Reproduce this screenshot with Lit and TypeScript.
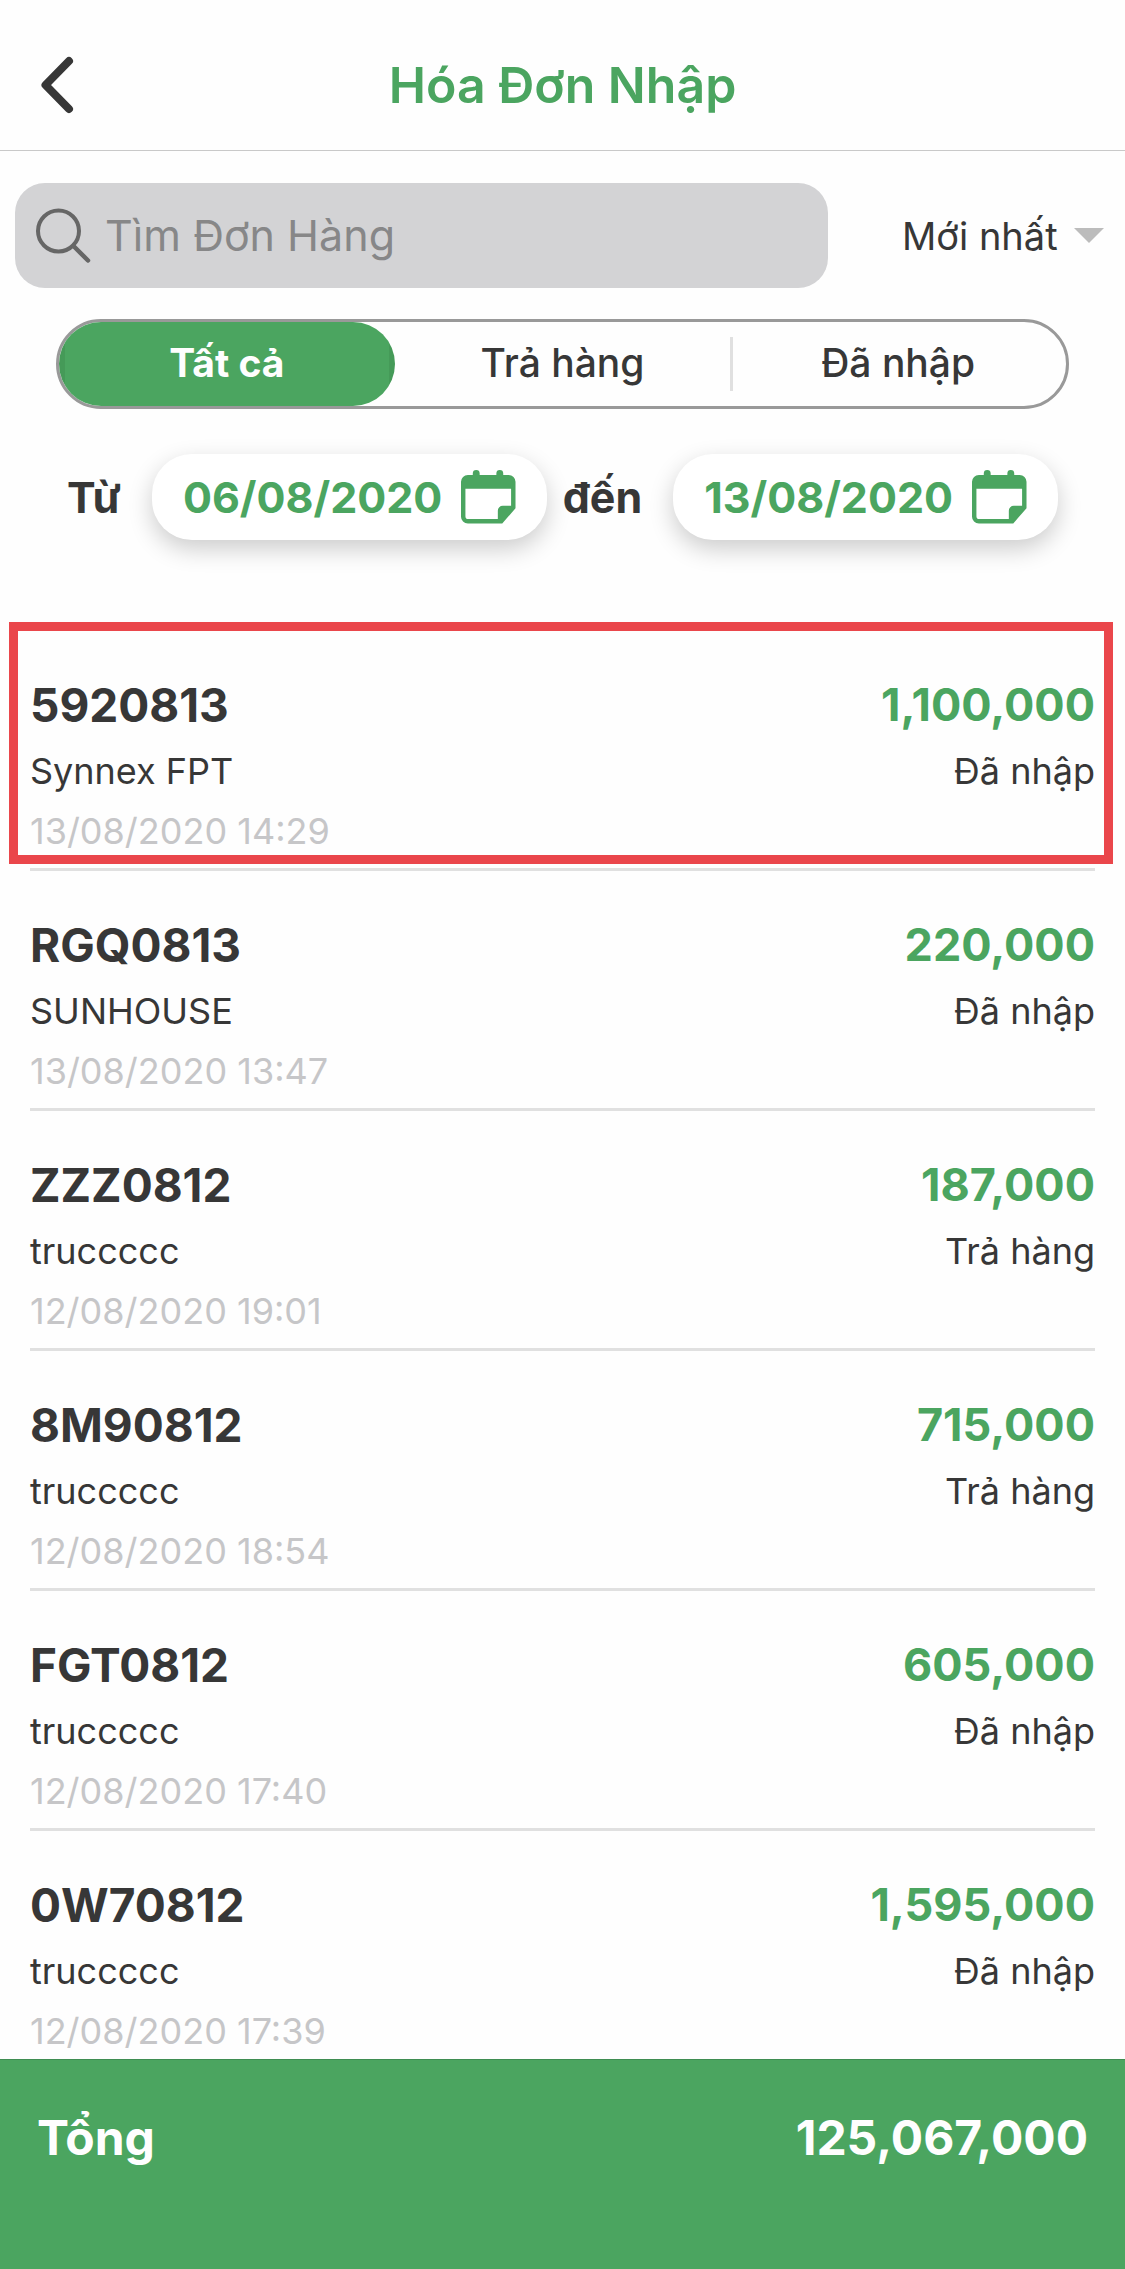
import { LitElement, html, css, svg } from "lit";
import { customElement, property, state } from "lit/decorators.js";
import { classMap } from "lit/directives/class-map.js";

interface Invoice {
  code: string;
  supplier: string;
  time: string;
  amount: string;
  status: string;
}

const INVOICES: Invoice[] = [
  { code: "5920813", supplier: "Synnex FPT", time: "13/08/2020 14:29", amount: "1,100,000", status: "Đã nhập" },
  { code: "RGQ0813", supplier: "SUNHOUSE", time: "13/08/2020 13:47", amount: "220,000", status: "Đã nhập" },
  { code: "ZZZ0812", supplier: "truccccc", time: "12/08/2020 19:01", amount: "187,000", status: "Trả hàng" },
  { code: "8M90812", supplier: "truccccc", time: "12/08/2020 18:54", amount: "715,000", status: "Trả hàng" },
  { code: "FGT0812", supplier: "truccccc", time: "12/08/2020 17:40", amount: "605,000", status: "Đã nhập" },
  { code: "0W70812", supplier: "truccccc", time: "12/08/2020 17:39", amount: "1,595,000", status: "Đã nhập" },
];

const FILTERS = ["Tất cả", "Trả hàng", "Đã nhập"];

const backIcon = html`<svg class="back-icon" viewBox="0 0 34 58" aria-hidden="true">
  ${svg`<path d="M29 5 5.500 29 29 53" fill="none" stroke="currentColor" stroke-width="8" stroke-linecap="round" stroke-linejoin="round"/>`}
</svg>`;

const searchIcon = html`<svg class="search-icon" viewBox="0 0 56 56" aria-hidden="true">
  ${svg`<circle cx="23.500" cy="24" r="20.500" fill="none" stroke="currentColor" stroke-width="4"/>
  <path d="M38.500 39 53 53.500" fill="none" stroke="currentColor" stroke-width="4.500" stroke-linecap="round"/>`}
</svg>`;

const calendarIcon = html`<svg class="calendar-icon" viewBox="0 0 56 54" aria-hidden="true">
  ${svg`<path fill="currentColor" fill-rule="evenodd" d="M7 4.500h5V3a3.500 3.500 0 0 1 7 0v1.500h17V3a3.500 3.500 0 0 1 7 0v1.500h5.500a7 7 0 0 1 7 7V38.500L42 54H7a7 7 0 0 1-7-7V11.500a7 7 0 0 1 7-7ZM4.500 18.500V46.500a3 3 0 0 0 3 3H37.500V41a5 5 0 0 1 5-5H51V18.500Z"/>`}
</svg>`;

@customElement("invoice-row")
export class InvoiceRow extends LitElement {
  @property({ attribute: false }) invoice!: Invoice;
  @property({ type: Boolean, reflect: true }) highlighted = false;

  static styles = css`
    :host {
      display: block;
      position: relative;
      border-bottom: 3px solid #e0e0e0;
      padding: 44px 0 7px;
    }
    :host([highlighted])::after {
      content: "";
      position: absolute;
      inset: -9px -18px 4px -21px;
      border: 9px solid #ea464b;
      pointer-events: none;
    }
    .line {
      display: flex;
      justify-content: space-between;
      font-size: 36px;
      line-height: 60px;
      color: #373737;
    }
    .line.main {
      font-weight: 700;
      margin-bottom: 6px;
    }
    .code { font-size: 46px; }
    .amount { font-size: 45px; color: #4ba560; }
    .time { color: #c6c6c8; }
  `;

  render() {
    const i = this.invoice;
    return html`
      <div class="line main"><span class="code">${i.code}</span><span class="amount">${i.amount}</span></div>
      <div class="line"><span>${i.supplier}</span><span>${i.status}</span></div>
      <div class="line"><span class="time">${i.time}</span></div>
    `;
  }
}

@customElement("app-root")
export class AppRoot extends LitElement {
  @state() private filter = 0;

  static styles = css`
    :host {
      display: flex;
      flex-direction: column;
      height: 100vh;
      background: #fefefe;
      color: #373737;
      font-family: Inter, "Noto Sans", sans-serif;
    }
    * { box-sizing: border-box; }
    button, input, select {
      font: inherit;
      color: inherit;
      background: none;
      border: 0;
      margin: 0;
      padding: 0;
      outline: 0;
    }
    svg { display: block; flex: none; overflow: visible; }
    .header {
      display: grid;
      grid-template-columns: 1fr auto 1fr;
      align-items: center;
      height: 151px;
      padding: 20px 40px 0;
      border-bottom: 1px solid #c9c9c9;
      flex: none;
    }
    .back { justify-self: start; }
    .back-icon { width: 34px; height: 58px; }
    .title {
      margin: 0;
      font-size: 50px;
      font-weight: 600;
      line-height: 60px;
      color: #4ba560;
    }
    .tools {
      display: flex;
      align-items: center;
      gap: 74px;
      padding: 32px 21px 0 15px;
      flex: none;
    }
    .search {
      flex: 1;
      display: flex;
      align-items: center;
      gap: 14px;
      height: 105px;
      padding: 0 20px 2px;
      border-radius: 30px;
      background: #d3d3d5;
      font-size: 43px;
    }
    .search-icon { width: 56px; height: 56px; color: #666; }
    .query { flex: 1; min-width: 0; height: 60px; }
    .query::placeholder { color: #878788; opacity: 1; }
    .sort {
      display: flex;
      align-items: center;
      gap: 16px;
      font-size: 38px;
    }
    .sort-select { appearance: none; line-height: 60px; }
    .caret { width: 30px; height: 15px; color: #bcbcbc; }
    .filters {
      display: grid;
      grid-template-columns: repeat(3, 1fr);
      height: 90px;
      margin: 31px 56px 0;
      border: 3px solid #999;
      border-radius: 45px;
      flex: none;
    }
    .filter {
      font-size: 39px;
      font-weight: 500;
      padding-bottom: 4px;
      border-radius: 42px;
    }
    .filter.active {
      font-weight: 700;
      color: #fefefe;
      background: linear-gradient(90deg, #459a58 6px, #4ba560 6px calc(100% - 6px), #459a58 calc(100% - 6px));
    }
    .filter.divided {
      border-radius: 0;
      background: linear-gradient(#e0e0e0, #e0e0e0) left center / 3px 54px no-repeat;
    }
    .range {
      display: flex;
      align-items: center;
      justify-content: space-between;
      padding: 45px 67px 0;
      font-size: 43px;
      font-weight: 700;
      flex: none;
    }
    .bound {
      display: flex;
      align-items: center;
      gap: 31px;
    }
    .date {
      display: flex;
      align-items: center;
      gap: 19px;
      height: 86px;
      padding: 0 31px;
      border-radius: 40px;
      background: #fff;
      color: #4ba560;
      box-shadow: 0 9px 24px rgba(0, 0, 0, 0.2);
    }
    .calendar-icon { width: 55px; height: 54px; }
    .list {
      flex: 1;
      min-height: 0;
      margin: 60px 0 0;
      padding: 31px 30px 0;
      overflow-y: auto;
      scrollbar-width: none;
      list-style: none;
    }
    .total {
      display: flex;
      justify-content: space-between;
      height: 210px;
      padding: 48px 37px 0;
      border-top: 1px solid #3f8d51;
      background: #4ba560;
      color: #fefefe;
      font-size: 48px;
      font-weight: 700;
      line-height: 60px;
      flex: none;
    }
  `;

  render() {
    return html`
      <header class="header">
        <button class="back" type="button" aria-label="Quay lại">${backIcon}</button>
        <h1 class="title">Hóa Đơn Nhập</h1>
      </header>
      <div class="tools">
        <label class="search">
          ${searchIcon}
          <input class="query" type="text" placeholder="Tìm Đơn Hàng" aria-label="Tìm Đơn Hàng" />
        </label>
        <label class="sort">
          <select class="sort-select" aria-label="Sắp xếp">
            <option>Mới nhất</option>
          </select>
          <svg class="caret" viewBox="0 0 30 15" aria-hidden="true"><path d="M0 0H30L15 15Z" fill="currentColor" /></svg>
        </label>
      </div>
      <div class="filters" role="group">
        ${FILTERS.map(
          (name, i) => html`<button
            type="button"
            class=${classMap({
              filter: true,
              active: i === this.filter,
              divided: i > 0 && i !== this.filter && i - 1 !== this.filter,
            })}
            aria-pressed=${i === this.filter}
            @click=${() => (this.filter = i)}
          >${name}</button>`,
        )}
      </div>
      <div class="range">
        <div class="bound">
          <label for="from">Từ</label>
          <button class="date" id="from" type="button">06/08/2020 ${calendarIcon}</button>
        </div>
        <div class="bound">
          <label for="to">đến</label>
          <button class="date" id="to" type="button">13/08/2020 ${calendarIcon}</button>
        </div>
      </div>
      <ul class="list">
        ${INVOICES.map(
          (inv, i) => html`<li><invoice-row .invoice=${inv} ?highlighted=${i === 0}></invoice-row></li>`,
        )}
      </ul>
      <footer class="total"><span>Tổng</span><span>125,067,000</span></footer>
    `;
  }
}
